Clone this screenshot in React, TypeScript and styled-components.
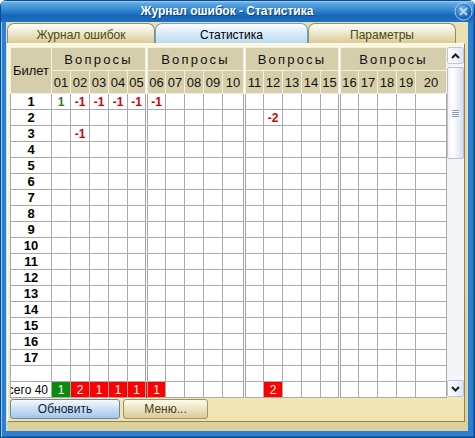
import styled, { createGlobalStyle } from "styled-components";

const GlobalStyle = createGlobalStyle`
  html, body { margin: 0; padding: 0; background: #ffffff; }
  body { font-family: "Liberation Sans", Arial, sans-serif; }
  * { box-sizing: border-box; }
`;

type Tone = "gain" | "loss";
type Mark = { v: string; tone: Tone };

const GROUPS = [
  [1, 2, 3, 4, 5],
  [6, 7, 8, 9, 10],
  [11, 12, 13, 14, 15],
  [16, 17, 18, 19, 20],
];
const QUESTIONS = GROUPS.flat();
const COL_WIDTHS = [41, 19, 19, 19, 19, 19, 19, 19, 19, 19, 22, 19, 19, 19, 19, 19, 19, 19, 19, 19];
const TICKETS = Array.from({ length: 17 }, (_, i) => i + 1);

const MARKS: Record<number, Record<number, Mark>> = {
  1: {
    1: { v: "1", tone: "gain" },
    2: { v: "-1", tone: "loss" },
    3: { v: "-1", tone: "loss" },
    4: { v: "-1", tone: "loss" },
    5: { v: "-1", tone: "loss" },
    6: { v: "-1", tone: "loss" },
  },
  2: { 12: { v: "-2", tone: "loss" } },
  3: { 2: { v: "-1", tone: "loss" } },
};

const TOTALS: Record<number, Mark> = {
  1: { v: "1", tone: "gain" },
  2: { v: "2", tone: "loss" },
  3: { v: "1", tone: "loss" },
  4: { v: "1", tone: "loss" },
  5: { v: "1", tone: "loss" },
  6: { v: "1", tone: "loss" },
  12: { v: "2", tone: "loss" },
};

const isSplit = (q: number) => q === 6 || q === 11 || q === 16;

const Window = styled.div`
  width: 475px;
  height: 438px;
  display: flex;
  flex-direction: column;
  background: #2b80d3;
  border-radius: 7px 7px 0 0;
  overflow: hidden;
  box-shadow: inset 1px 0 #0d4a92, inset -1px 0 #0d4a92, inset 0 -1px #0d4a92,
    inset 2px 0 #8fcaf4, inset -2px 0 #1a5fae, inset 0 -2px #1a5fae;
`;

const TitleBar = styled.div`
  height: 22px;
  flex: none;
  display: grid;
  grid-template-columns: 1fr 19px;
  align-items: center;
  padding: 0 2px 0 0;
  background: linear-gradient(180deg, #c2e2f8 0%, #5ea8e2 14%, #3389d2 45%, #1664b6 72%, #1f73c4 100%);
  box-shadow: inset 1px 0 #0d4a92, inset -1px 0 #0d4a92, inset 0 1px #0d4a92;
`;

const Title = styled.div`
  text-align: center;
  color: #ffffff;
  font-size: 12px;
  font-weight: bold;
  text-shadow: 1px 1px 0 #0b3f82;
`;

const CloseButton = styled.div`
  width: 19px;
  height: 19px;
  display: flex;
  align-items: center;
  justify-content: center;
`;

const Body = styled.div`
  flex: 1;
  display: flex;
  padding: 0 7px 7px 6px;
`;

const Client = styled.div`
  flex: 1;
  display: flex;
  flex-direction: column;
  background: linear-gradient(180deg, #e9e0b4, #dcd09c);
  border-left: 1px solid #cfe6f8;
`;

const TabRow = styled.div`
  height: 21px;
  flex: none;
  display: flex;
  align-items: flex-end;
`;

const Tab = styled.div<{ $active?: boolean; $w: number }>`
  width: ${({ $w }) => $w}px;
  height: 20px;
  display: flex;
  align-items: center;
  justify-content: center;
  font-size: 12px;
  padding-top: 2px;
  border: 1px solid ${({ $active }) => ($active ? "#6f9fd0" : "#968d5c")};
  border-bottom: none;
  border-radius: 7px 7px 0 0;
  color: ${({ $active }) => ($active ? "#000000" : "#4c4712")};
  background: ${({ $active }) =>
    $active
      ? "linear-gradient(180deg, #ffffff 0%, #e2f0fb 35%, #b9daf4 100%)"
      : "linear-gradient(180deg, #ffffff 0%, #f2eed8 35%, #d8cd96 100%)"};
`;

const Panel = styled.div`
  height: 379px;
  flex: none;
  margin-right: 3px;
  display: flex;
  flex-direction: column;
  gap: 2px;
  padding: 3px 0 1px 2px;
  background: linear-gradient(180deg, #fbf7de 0%, #f7f0c8 80%, #efe4b0 100%);
  border: 1px solid #fffbe6;
  border-right-color: #8f8450;
  border-bottom-color: #8f8450;
`;

const Sheet = styled.div`
  height: 350px;
  display: flex;
`;

const Grid = styled.table`
  width: 437px;
  height: 350px;
  border-collapse: collapse;
  table-layout: fixed;
  background: #ffffff;
  border: 1px solid #8c8c8c;
`;

const Col = styled.col<{ $w?: number }>`
  width: ${({ $w }) => ($w ? `${$w}px` : "auto")};
`;

const HeadRow = styled.tr`
  height: 23px;
`;

const Row = styled.tr`
  height: 16px;
`;

const HeadCell = styled.th<{ $split?: boolean; $spaced?: boolean }>`
  padding: 0;
  background: #d6ceaa;
  border: 1px solid #f3efdf;
  border-left: ${({ $split }) => ($split ? "3px double #f3efdf" : "1px solid #f3efdf")};
  font-weight: normal;
  font-size: 13px;
  color: #111111;
  text-align: center;
  letter-spacing: ${({ $spaced }) => ($spaced ? "2.2px" : "0")};
  white-space: nowrap;
  overflow: hidden;
`;

const Cell = styled.td<{ $split?: boolean; $tone?: Tone }>`
  padding: 0;
  border: 1px solid #a9a9a9;
  border-left: ${({ $split }) => ($split ? "3px double #a4a4a4" : "1px solid #a9a9a9")};
  text-align: center;
  font-size: 12px;
  font-weight: bold;
  color: ${({ $tone }) => ($tone === "gain" ? "#2d7d2d" : "#d40000")};
`;

const TotalCell = styled(Cell)<{ $fill?: Tone }>`
  font-weight: normal;
  color: #ffffff;
  background: ${({ $fill }) => ($fill === "gain" ? "#0b8a10" : $fill === "loss" ? "#ff0000" : "#ffffff")};
`;

const Label = styled.td`
  padding: 0;
  border: 1px solid #a9a9a9;
  text-align: center;
  font-size: 13px;
  font-weight: bold;
  color: #000000;
`;

const TotalLabel = styled.td`
  padding: 0;
  border: 1px solid #a9a9a9;
  overflow: hidden;
`;

const TotalText = styled.div`
  display: flex;
  justify-content: flex-end;
  overflow: hidden;
  padding-right: 3px;
  font-size: 12px;
  color: #000000;
  white-space: nowrap;

  & span {
    flex: none;
  }
`;

const ScrollBar = styled.div`
  width: 17px;
  display: flex;
  flex-direction: column;
  background: #f4f5f9;
`;

const ScrollButton = styled.div`
  width: 17px;
  height: 17px;
  flex: none;
  display: flex;
  align-items: center;
  justify-content: center;
  border: 1px solid #bcc7de;
  border-radius: 2px;
  background: linear-gradient(90deg, #ffffff, #dde5f4);
`;

const Thumb = styled.div`
  margin-top: 3px;
  height: 92px;
  flex: none;
  display: flex;
  flex-direction: column;
  align-items: center;
  justify-content: center;
  gap: 1px;
  border: 1px solid #b6c2da;
  border-radius: 2px;
  background: linear-gradient(90deg, #eef2fb, #ffffff 30%, #d6dff0);

  & i {
    width: 7px;
    height: 1px;
    background: #8a97b4;
    box-shadow: 0 1px 0 #ffffff;
  }
`;

const Track = styled.div`
  flex: 1;
`;

const ButtonBar = styled.div`
  height: 20px;
  display: flex;
  gap: 3px;
`;

const Button = styled.button<{ $tone: "blue" | "sand"; $w: number }>`
  width: ${({ $w }) => $w}px;
  height: 20px;
  padding: 0;
  font-family: "Liberation Sans", Arial, sans-serif;
  font-size: 12px;
  border-radius: 3px;
  border: 1px solid ${({ $tone }) => ($tone === "blue" ? "#6686b2" : "#a09464")};
  color: ${({ $tone }) => ($tone === "blue" ? "#13203a" : "#4a4318")};
  background: ${({ $tone }) =>
    $tone === "blue"
      ? "linear-gradient(180deg, #f6fafe 0%, #cde2f5 45%, #a2c7ea 100%)"
      : "linear-gradient(180deg, #fdfbf1 0%, #ede6c4 45%, #d7cb98 100%)"};
`;

function Arrow({ up }: { up?: boolean }) {
  return (
    <svg width="9" height="6" viewBox="0 0 9 6">
      <polyline
        points={up ? "1,5 4.5,1.5 8,5" : "1,1 4.5,4.5 8,1"}
        fill="none"
        stroke="#1c1c1c"
        strokeWidth="2"
      />
    </svg>
  );
}

function CloseIcon() {
  return (
    <svg width="19" height="19" viewBox="0 0 19 19">
      <defs>
        <radialGradient id="cb" cx="0.4" cy="0.35" r="0.7">
          <stop offset="0" stopColor="#7cbcec" />
          <stop offset="0.6" stopColor="#2a76c2" />
          <stop offset="1" stopColor="#0f4f98" />
        </radialGradient>
      </defs>
      <circle cx="9.5" cy="9.5" r="8.5" fill="url(#cb)" stroke="#a9d4f4" strokeWidth="1" />
      <path d="M6.5 6.5 L12.5 12.5 M12.5 6.5 L6.5 12.5" stroke="#dbeefc" strokeWidth="2" strokeLinecap="round" opacity="0.75" />
    </svg>
  );
}

export default function App() {
  return (
    <>
      <GlobalStyle />
      <Window>
        <TitleBar>
          <Title>Журнал ошибок - Статистика</Title>
          <CloseButton>
            <CloseIcon />
          </CloseButton>
        </TitleBar>
        <Body>
          <Client>
            <TabRow>
              <Tab $w={148}>Журнал ошибок</Tab>
              <Tab $w={153} $active>
                Статистика
              </Tab>
              <Tab $w={148}>Параметры</Tab>
            </TabRow>
            <Panel>
              <Sheet>
                <Grid>
                  <colgroup>
                    {COL_WIDTHS.map((w, i) => (
                      <Col key={i} $w={w} />
                    ))}
                    <Col />
                  </colgroup>
                  <thead>
                    <HeadRow>
                      <HeadCell rowSpan={2}>Билет</HeadCell>
                      {GROUPS.map((g, i) => (
                        <HeadCell key={i} colSpan={5} $split={i > 0} $spaced>
                          Вопросы
                        </HeadCell>
                      ))}
                    </HeadRow>
                    <HeadRow>
                      {QUESTIONS.map((q) => (
                        <HeadCell key={q} $split={isSplit(q)}>
                          {String(q).padStart(2, "0")}
                        </HeadCell>
                      ))}
                    </HeadRow>
                  </thead>
                  <tbody>
                    {TICKETS.map((t) => (
                      <Row key={t}>
                        <Label>{t}</Label>
                        {QUESTIONS.map((q) => {
                          const m = MARKS[t]?.[q];
                          return (
                            <Cell key={q} $split={isSplit(q)} $tone={m?.tone}>
                              {m?.v}
                            </Cell>
                          );
                        })}
                      </Row>
                    ))}
                    <Row>
                      <Label />
                      {QUESTIONS.map((q) => (
                        <Cell key={q} $split={isSplit(q)} />
                      ))}
                    </Row>
                    <Row>
                      <TotalLabel>
                        <TotalText>
                          <span>Всего 40</span>
                        </TotalText>
                      </TotalLabel>
                      {QUESTIONS.map((q) => (
                        <TotalCell key={q} $split={isSplit(q)} $fill={TOTALS[q]?.tone}>
                          {TOTALS[q]?.v}
                        </TotalCell>
                      ))}
                    </Row>
                  </tbody>
                </Grid>
                <ScrollBar>
                  <ScrollButton>
                    <Arrow up />
                  </ScrollButton>
                  <Thumb>
                    <i />
                    <i />
                    <i />
                    <i />
                  </Thumb>
                  <Track />
                  <ScrollButton>
                    <Arrow />
                  </ScrollButton>
                </ScrollBar>
              </Sheet>
              <ButtonBar>
                <Button $tone="blue" $w={110}>
                  Обновить
                </Button>
                <Button $tone="sand" $w={85}>
                  Меню...
                </Button>
              </ButtonBar>
            </Panel>
          </Client>
        </Body>
      </Window>
    </>
  );
}
